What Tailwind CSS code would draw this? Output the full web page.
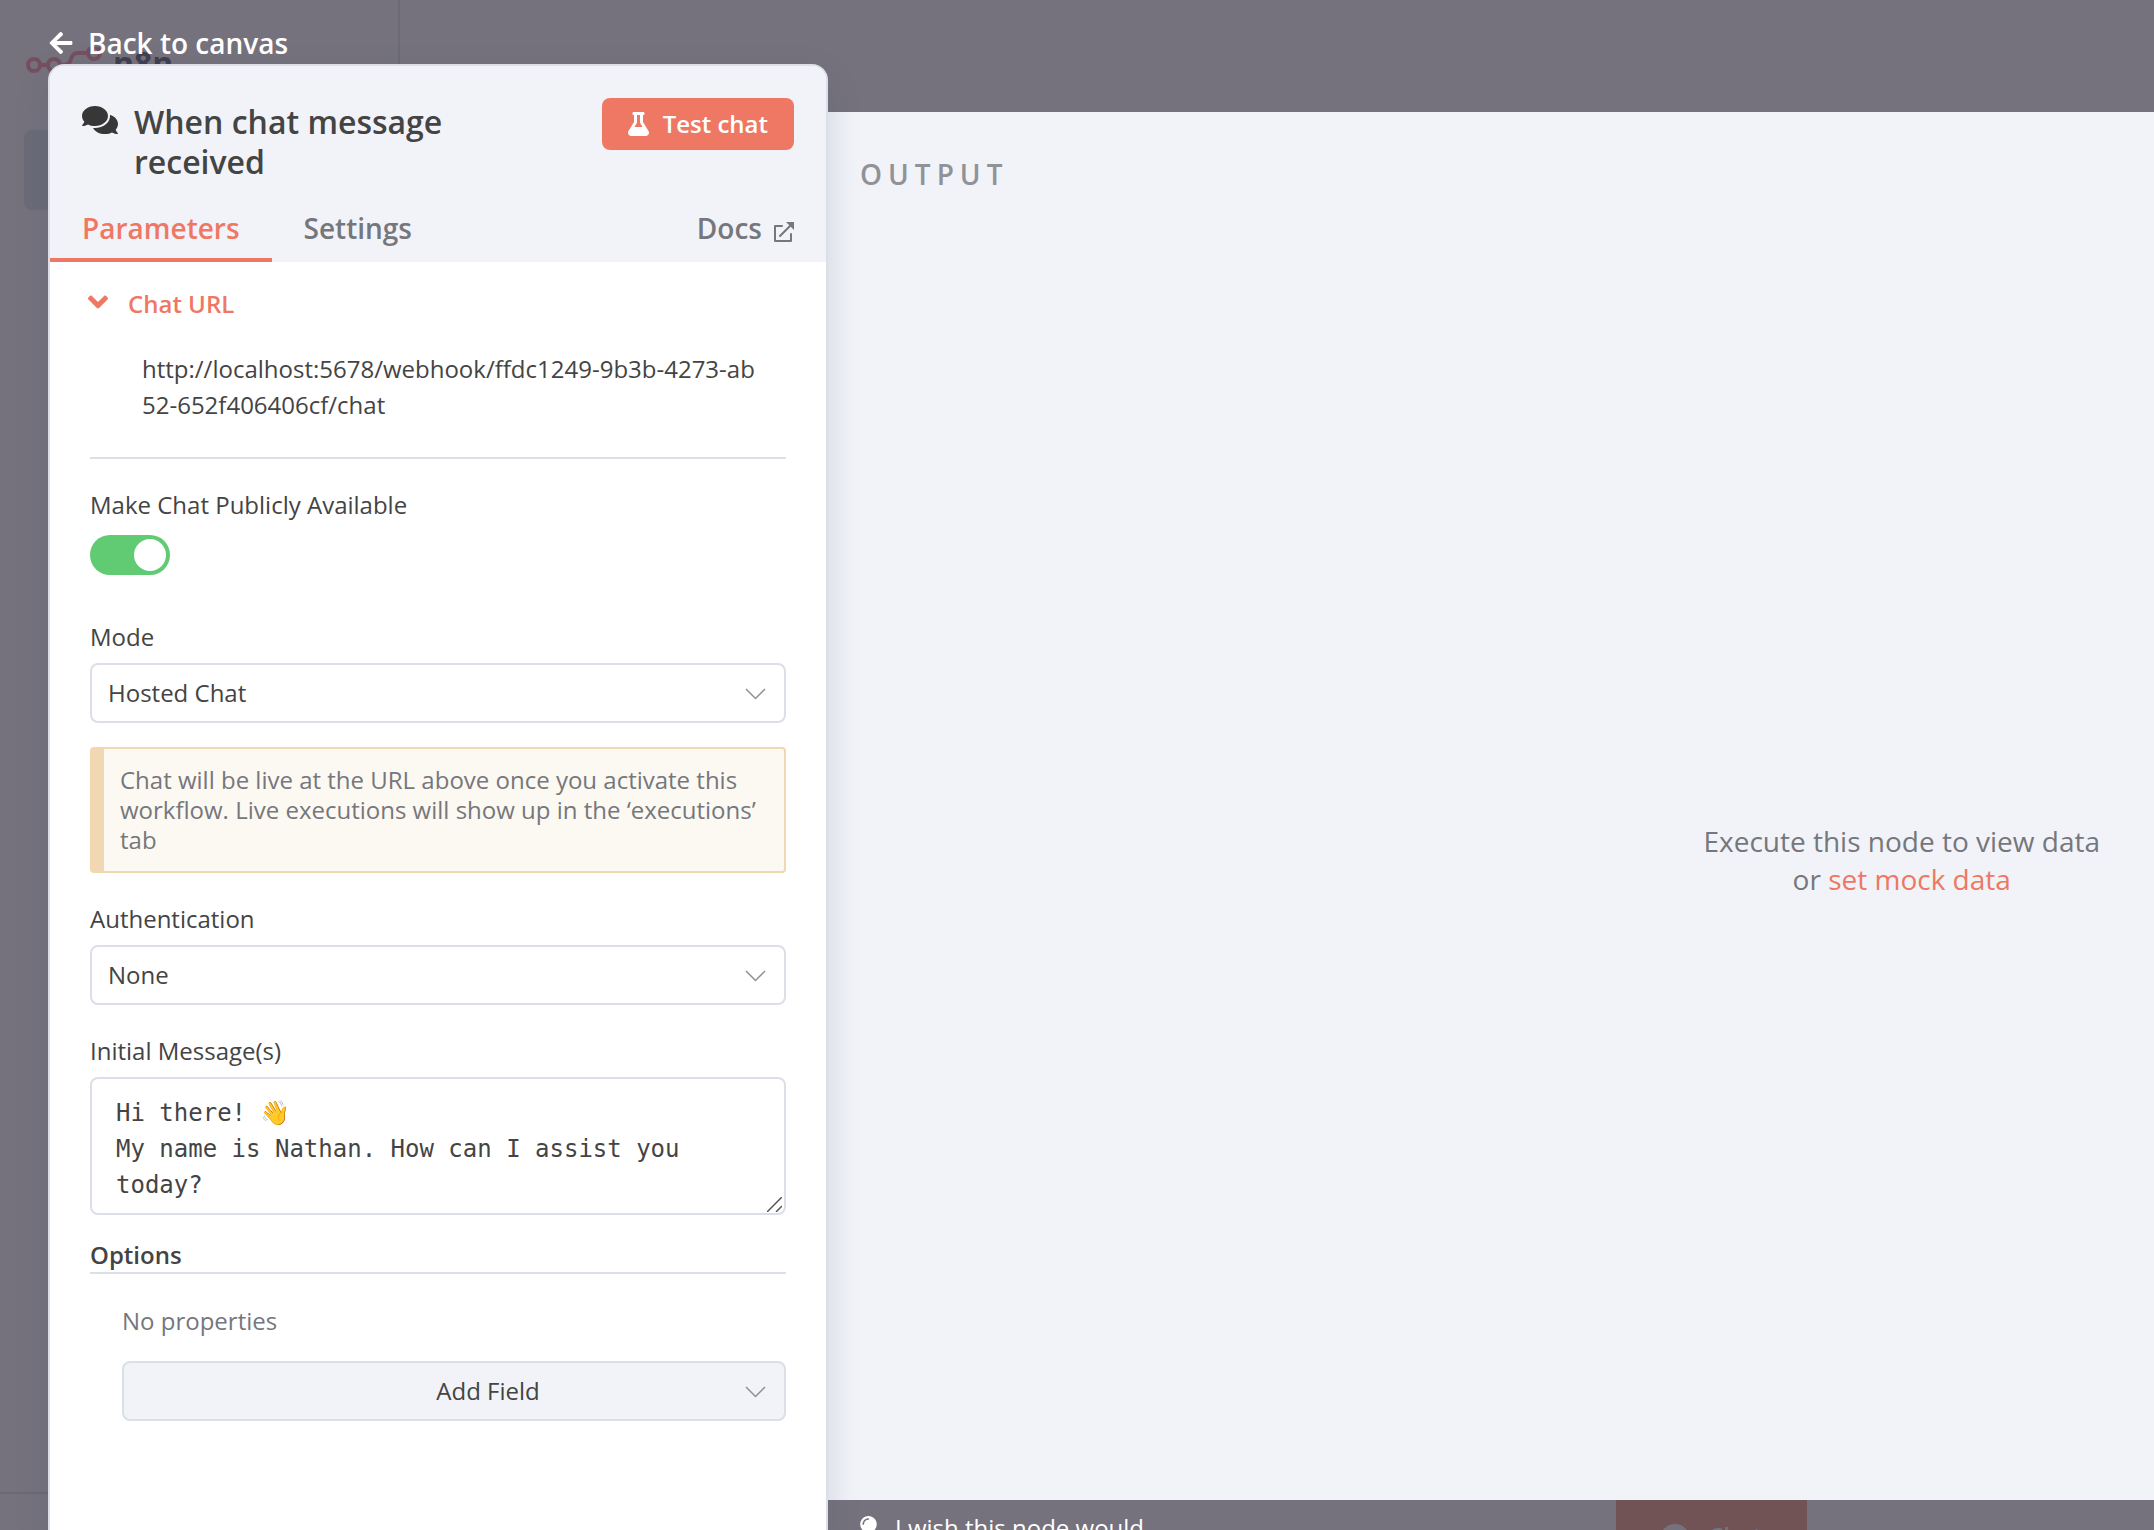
<!DOCTYPE html>
<html lang="en">
<head>
    <meta charset="UTF-8">
    <meta name="viewport" content="width=device-width, initial-scale=1.0">
    <title>When chat message received</title>
    <script src="https://cdn.jsdelivr.net/npm/@tailwindcss/browser@4"></script>
</head>
<body class="relative h-screen overflow-hidden bg-[#75727d] font-['Open_Sans',sans-serif] text-2xl leading-8 text-[#444444]">

<!-- dimmed canvas behind the panel -->
<div class="absolute inset-y-0 left-0 w-[400px] border-r-2 border-[#6b6a77]" aria-hidden="true">
    <div class="absolute left-[26px] top-[47px] flex items-start gap-[11px]">
        <svg class="h-[26px] w-[76px]" viewBox="0 0 76 26" fill="none" stroke="#754f60" stroke-width="4">
            <circle cx="8" cy="18" r="6"/>
            <circle cx="28" cy="18" r="6"/>
            <circle cx="68" cy="6" r="6"/>
            <path d="M14 18h8M34 18h4c4 0 6-2 7-6s3-6 7-6h10"/>
        </svg>
        <span class="text-[32px] font-bold leading-8 text-[#403e50]">n8n</span>
    </div>
    <div class="absolute left-6 top-[130px] h-20 w-80 rounded-lg bg-[#6a6b77]"></div>
    <div class="absolute bottom-9 left-0 h-0.5 w-full bg-[#6a6977]"></div>
</div>

<div class="relative flex h-full pl-12">

    <!-- node settings -->
    <section class="relative z-10 flex w-[780px] shrink-0 flex-col">
        <a href="#" class="flex h-16 items-center gap-[14px] pt-[22px] text-[28px] font-semibold text-white">
            <svg class="size-[26px]" viewBox="0 0 448 512" fill="currentColor"><path d="M257.500 445.100l-22.200 22.200c-9.400 9.400-24.600 9.400-33.900 0L7 273c-9.400-9.400-9.400-24.600 0-33.900L201.400 44.700c9.400-9.400 24.600-9.400 33.900 0l22.200 22.200c9.500 9.500 9.300 25-.4 34.300L136.600 216H424c13.300 0 24 10.700 24 24v32c0 13.300-10.700 24-24 24H136.600l120.500 114.800c9.800 9.300 10 24.800.4 34.300z"/></svg>
            Back to canvas
        </a>

        <div class="flex-1 overflow-hidden rounded-t-2xl border-2 border-b-0 border-[#dbdfe7] bg-white shadow-[0_12px_32px_rgba(68,84,110,0.2)]">
            <header class="bg-[#f1f3f8] pt-8">
                <div class="flex items-start pl-8 pr-8">
                    <svg class="mt-1.5 h-8 w-9 shrink-0" viewBox="0 0 576 512" fill="#373737"><path d="M416 192c0-88.400-93.100-160-208-160S0 103.600 0 192c0 34.300 14.100 65.900 38 92-13.400 30.200-35.500 54.200-35.800 54.500-2.200 2.300-2.800 5.700-1.500 8.700S4.800 352 8 352c36.600 0 66.900-12.300 88.700-25 32.200 15.700 70.300 25 111.300 25 114.900 0 208-71.600 208-160zm122 220c23.900-26 38-57.700 38-92 0-66.900-53.500-124.200-129.300-148.100.9 6.600 1.300 13.300 1.300 20.100 0 105.900-107.700 192-240 192-10.800 0-21.300-.8-31.700-1.900C207.800 439.600 281.800 480 368 480c41 0 79.100-9.200 111.300-25 21.800 12.700 52.100 25 88.700 25 3.200 0 6.100-1.900 7.300-4.800 1.300-2.900.7-6.300-1.500-8.700-.3-.3-22.400-24.200-35.800-54.500z"/></svg>
                    <h1 class="ml-4 mt-1 w-[400px] text-[32px] font-semibold leading-10">When chat message received</h1>
                    <button type="button" class="ml-auto flex h-[52px] shrink-0 items-center gap-[14px] rounded-lg bg-[#ee7864] px-[26px] font-semibold text-white">
                        <svg class="h-6 w-[21px]" viewBox="0 0 448 512" fill="currentColor"><path d="M437.200 403.500L320 215V64h8c13.300 0 24-10.700 24-24V24c0-13.300-10.700-24-24-24H120c-13.300 0-24 10.700-24 24v16c0 13.300 10.700 24 24 24h8v151L10.800 403.500C-18.500 450.600 15.300 512 70.900 512h306.200c55.700 0 89.400-61.500 60.100-108.500zM137.900 320l48.200-77.600c3.700-5.200 5.800-11.600 5.800-18.400V64h64v160c0 6.900 2.200 13.200 5.800 18.400l48.200 77.600h-172z"/></svg>
                        Test chat
                    </button>
                </div>
                <nav class="mt-[30px] flex text-[28px] font-semibold text-[#75777c]">
                    <a href="#" class="border-b-4 border-[#ee7864] px-8 pb-[14px] text-[#ee7864]">Parameters</a>
                    <a href="#" class="px-8 pb-[14px]">Settings</a>
                    <a href="#" class="ml-auto mr-8 flex items-start gap-3">
                        Docs
                        <svg class="mt-2.5 size-5" viewBox="0 0 20 20" fill="none" stroke="currentColor" stroke-width="2"><path d="M8 4H1v15h16v-7M6 14L17 3" stroke-linejoin="round" stroke-linecap="round"/><path d="M12 0h8v8l-3-3-2-2z" fill="currentColor" stroke="none"/></svg>
                    </a>
                </nav>
            </header>

            <div class="px-10">
                <button type="button" class="mt-[26px] flex font-semibold text-[#ee7864]">
                    <svg class="-ml-0.5 h-[28px] w-5" viewBox="0 0 320 448" fill="currentColor"><path d="M143 352.300L7 216.300c-9.400-9.400-9.400-24.600 0-33.900l22.600-22.600c9.400-9.400 24.600-9.400 33.900 0l96.400 96.400 96.400-96.400c9.400-9.400 24.600-9.400 33.900 0l22.600 22.600c9.400 9.400 9.400 24.600 0 33.900l-136 136c-9.200 9.400-24.400 9.400-33.800 0z" transform="translate(0 -32)"/></svg>
                    <span class="ml-5">Chat URL</span>
                </button>
                <p class="mt-[31px] break-all border-b-2 border-[#dbdfe7] pb-[34px] pl-[52px] pr-6 leading-9">http://localhost:5678/webhook/ffdc1249-9b3b-4273-ab52-652f406406cf/chat</p>

                <label for="public" class="mt-[30px] block">Make Chat Publicly Available</label>
                <div class="relative mt-[14px] h-10 w-20">
                    <input id="public" type="checkbox" role="switch" checked class="peer block h-10 w-20 appearance-none rounded-full bg-[#c5c9d3] checked:bg-[#61cb74]">
                    <span class="pointer-events-none absolute left-1 top-1 size-8 rounded-full bg-white peer-checked:left-11"></span>
                </div>

                <label for="mode" class="mt-[46px] block">Mode</label>
                <div class="relative mt-2.5">
                    <select id="mode" class="block h-[60px] w-full appearance-none rounded-lg border-2 border-[#dbdfe7] bg-white px-4">
                        <option>Hosted Chat</option>
                    </select>
                    <svg class="pointer-events-none absolute right-5 top-[25px] h-3 w-[21px]" viewBox="0 0 21 12" fill="none" stroke="#8e9096" stroke-width="1.500"><path d="M1 1l9.500 9.500L20 1"/></svg>
                </div>

                <p class="mt-6 rounded border-2 border-l-[14px] border-[#f1d8b3] bg-[#fcf9f2] px-4 py-4 leading-[30px] text-[#75777c]">Chat will be live at the URL above once you activate this workflow. Live executions will show up in the ‘executions’ tab</p>

                <label for="auth" class="mt-[30px] block">Authentication</label>
                <div class="relative mt-2.5">
                    <select id="auth" class="block h-[60px] w-full appearance-none rounded-lg border-2 border-[#dbdfe7] bg-white px-4">
                        <option>None</option>
                    </select>
                    <svg class="pointer-events-none absolute right-5 top-[25px] h-3 w-[21px]" viewBox="0 0 21 12" fill="none" stroke="#8e9096" stroke-width="1.500"><path d="M1 1l9.500 9.500L20 1"/></svg>
                </div>

                <label for="messages" class="mt-[30px] block">Initial Message(s)</label>
                <div class="relative mt-2.5">
                    <textarea id="messages" spellcheck="false" class="block h-[138px] w-full resize-none overflow-hidden rounded-lg border-2 border-[#dbdfe7] bg-white px-6 py-4 font-['DejaVu_Sans_Mono','Noto_Color_Emoji',monospace] leading-9">Hi there! 👋
My name is Nathan. How can I assist you today?</textarea>
                    <svg class="pointer-events-none absolute bottom-[3px] right-1 size-[15px]" viewBox="0 0 15 15" fill="none" stroke="#555" stroke-width="1.500"><path d="M0 15L15 0M9 15l6-6"/></svg>
                </div>

                <h2 class="mt-6 border-b-2 border-[#dbdfe7] pb-px font-semibold">Options</h2>
                <div class="mt-[31px] pl-8">
                    <p class="text-[#75777c]">No properties</p>
                    <div class="relative mt-6">
                        <select aria-label="Add Field" class="block h-[60px] w-full appearance-none rounded-lg border-2 border-[#dbdfe7] bg-[#f1f3f8] pl-[84px] pr-4 text-center [text-align-last:center]">
                            <option>Add Field</option>
                        </select>
                        <svg class="pointer-events-none absolute right-5 top-[25px] h-3 w-[21px]" viewBox="0 0 21 12" fill="none" stroke="#8e9096" stroke-width="1.500"><path d="M1 1l9.500 9.500L20 1"/></svg>
                    </div>
                </div>
            </div>
        </div>
    </section>

    <!-- output -->
    <section class="flex min-w-0 flex-1 flex-col pt-28">
        <div class="flex flex-1 flex-col bg-[#f1f3f8]">
            <h2 class="h-[108px] pl-8 pt-[46px] text-[28px] font-semibold tracking-[6px] text-[#909298]">OUTPUT</h2>
            <div class="flex flex-1 items-center justify-end pr-[54px]">
                <p class="text-center text-[28px] leading-[38px] text-[#75777c]">Execute this node to view data<br>or <a href="#" class="text-[#ee7864]">set mock data</a></p>
            </div>
        </div>
        <footer class="relative flex h-[30px] items-start overflow-hidden">
            <a href="#" class="ml-8 mt-3 flex text-white">
                <svg class="mt-1 h-6 w-[17px]" viewBox="0 0 352 512" fill="currentColor"><path d="M96 454c0 6 2 12 5 18l17 25c6 9 16 15 27 15h62c11 0 21-6 27-15l17-25c3-5 5-11 5-18V416H96zM0 176c0 44 16 85 44 116 16 19 42 58 52 92h160c10-34 36-73 52-92 28-31 44-72 44-116C352 79 273 0 176 0 73 0 0 84 0 176zm176-96c-53 0-96 43-96 96 0 9-7 16-16 16s-16-7-16-16c0-71 57-128 128-128 9 0 16 7 16 16s-7 16-16 16z"/></svg>
                <span class="ml-[18px]">I wish this node would...</span>
            </a>
            <!-- canvas chat button, dimmed -->
            <div class="absolute left-[788px] top-0 flex h-20 w-[191px] items-start gap-[18px] bg-[#715356] pl-11 pt-5 text-[#75727d]" aria-hidden="true">
                <span class="mt-1 size-[30px] shrink-0 rounded-full bg-[#75727d]"></span>
                <span class="font-semibold">Chat</span>
            </div>
        </footer>
    </section>
</div>

</body>
</html>
